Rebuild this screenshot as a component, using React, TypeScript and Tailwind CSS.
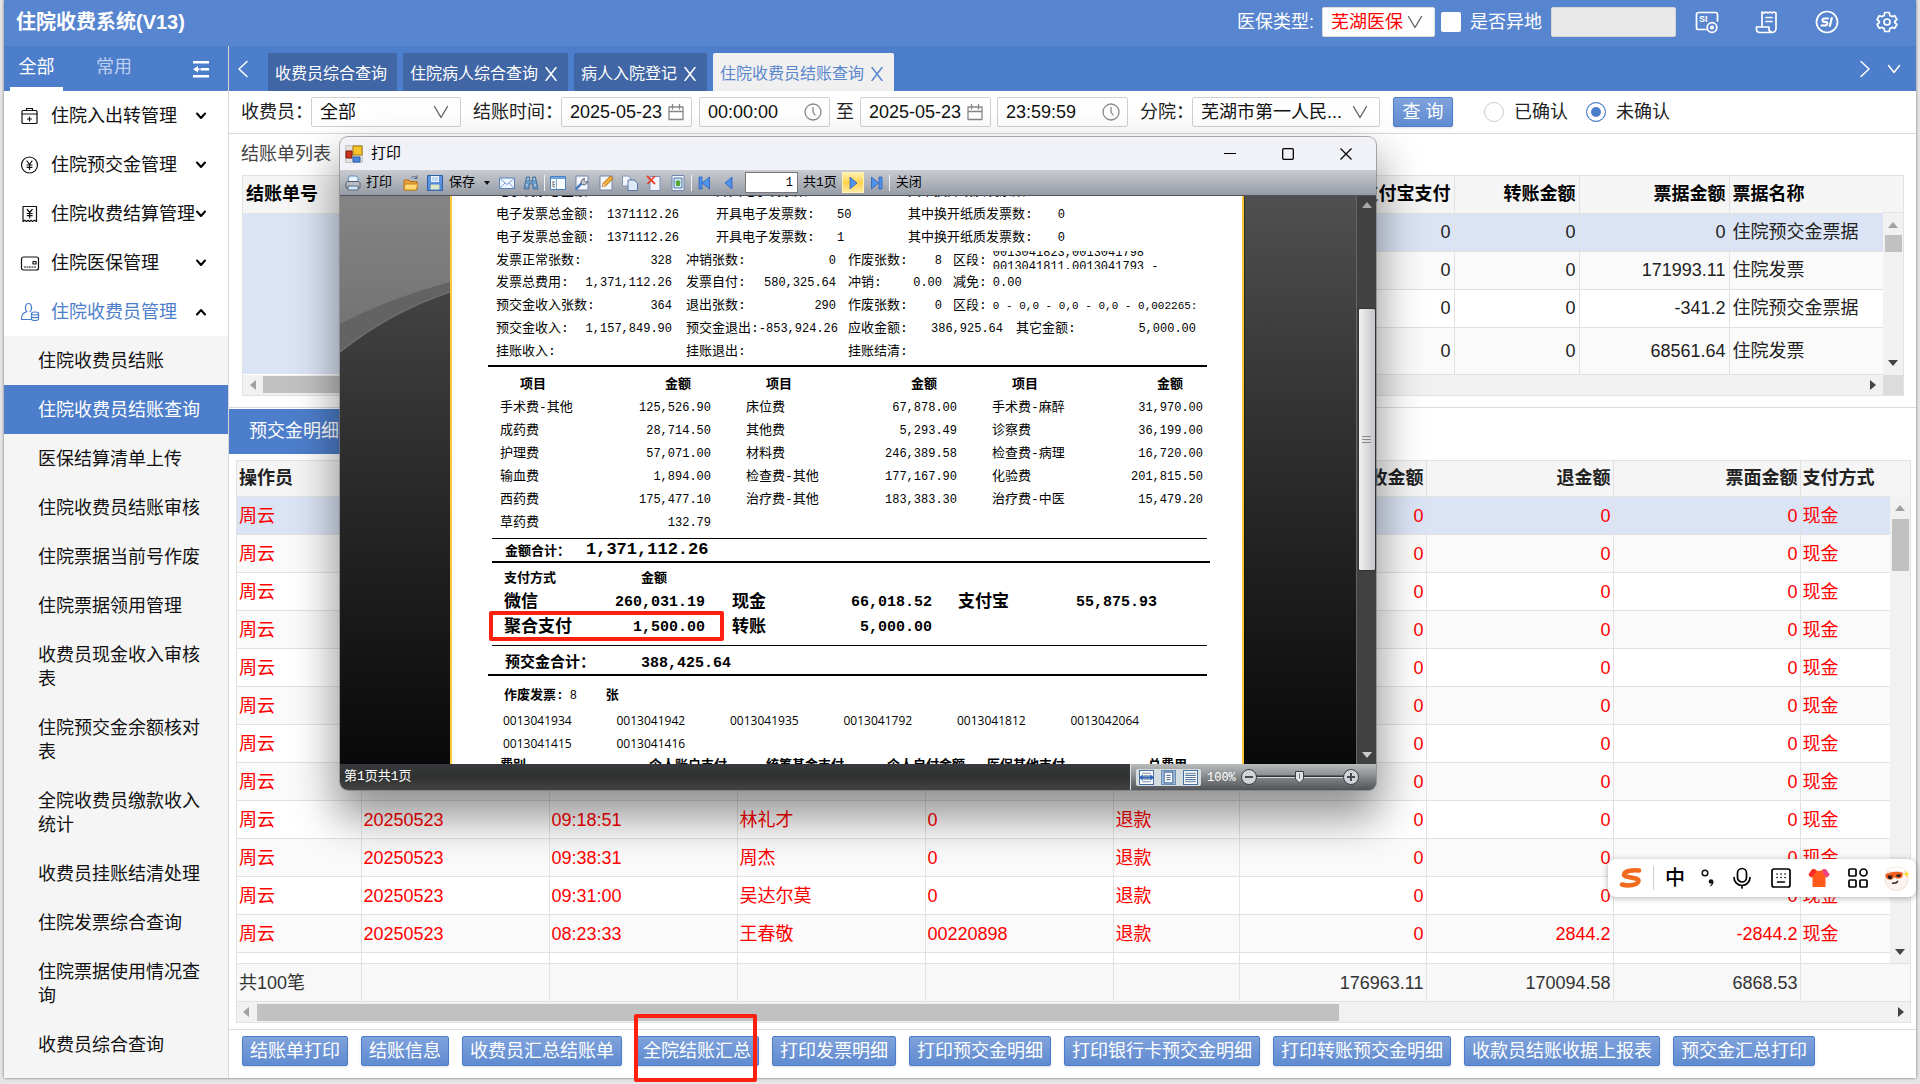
import type { ReactNode } from "react";
import { useState } from "react";

interface MenuItem {
  label: string;
  icon: ReactNode;
  open?: boolean;
}

interface DetailRow {
  date?: string;
  time?: string;
  name?: string;
  no?: string;
  kind?: string;
  received: string;
  refund: string;
  face: string;
}

const svgBase = {
  fill: "none",
  stroke: "currentColor",
  strokeLinecap: "round" as const,
  strokeLinejoin: "round" as const,
};

const menu: MenuItem[] = [
  {
    label: "住院入出转管理",
    icon: (
      <svg viewBox="0 0 20 20" className="size-5" strokeWidth="1.2" {...svgBase}>
        <rect x="2" y="4.500" width="15" height="13" rx="1" />
        <path d="M2 8h15M6.500 4.500V2.500h6v2M9.500 11v4M7.500 13h4" />
      </svg>
    ),
  },
  {
    label: "住院预交金管理",
    icon: (
      <svg viewBox="0 0 20 20" className="size-5" strokeWidth="1.2" {...svgBase}>
        <circle cx="9.500" cy="10" r="8" />
        <path d="M7 6l2.500 3.500L12 6M9.500 9.500v5M7 10h5M7 12.300h5" />
      </svg>
    ),
  },
  {
    label: "住院收费结算管理",
    icon: (
      <svg viewBox="0 0 20 20" className="size-5" strokeWidth="1.2" {...svgBase}>
        <path d="M3 2.500h13.500v15l-2-1.300-2 1.300-1.500-1.300L9.500 17.500 8 16.200 6.500 17.500l-1.700-1.300L3 17.500z" />
        <path d="M7.200 5.500l2.500 3 2.500-3M9.700 8.500V14M7.200 9.500h5M7.200 11.700h5" />
      </svg>
    ),
  },
  {
    label: "住院医保管理",
    icon: (
      <svg viewBox="0 0 20 20" className="size-5" strokeWidth="1.200" {...svgBase}>
        <rect x="1.500" y="4" width="17" height="13" rx="2" />
        <rect x="13" y="8.500" width="3" height="2.500" />
        <path d="M4.500 14h1M7 14h1M9.500 14h1M12 14h1M14.500 14h1" />
      </svg>
    ),
  },
  {
    label: "住院收费员管理",
    open: true,
    icon: (
      <svg viewBox="0 0 20 20" className="size-5" strokeWidth="1.2" {...svgBase}>
        <path d="M10 9.500C12 8.500 12.500 1.500 8.500 1.500S5 8.500 7 9.500C3 11 1.500 12.500 1.500 17.500h9" />
        <ellipse cx="15" cy="11.500" rx="3.500" ry="1.500" />
        <path d="M11.500 11.500v5.500c0 .8 1.600 1.500 3.500 1.500s3.500-.7 3.500-1.500v-5.500M11.500 14.200c0 .8 1.600 1.500 3.500 1.500s3.500-.7 3.500-1.500" />
      </svg>
    ),
  },
];

const subMenu = [
  "住院收费员结账",
  "住院收费员结账查询",
  "医保结算清单上传",
  "住院收费员结账审核",
  "住院票据当前号作废",
  "住院票据领用管理",
  "收费员现金收入审核表",
  "住院预交金余额核对表",
  "全院收费员缴款收入统计",
  "收费员挂账结清处理",
  "住院发票综合查询",
  "住院票据使用情况查询",
  "收费员综合查询",
];

const tabs = [
  { label: "收费员综合查询", closable: false },
  { label: "住院病人综合查询", closable: true },
  { label: "病人入院登记", closable: true },
  { label: "住院收费员结账查询", closable: true, active: true },
];

const bills = [
  { alipay: "0", transfer: "0", amount: "0", name: "住院预交金票据" },
  { alipay: "0", transfer: "0", amount: "171993.11", name: "住院发票" },
  { alipay: "0", transfer: "0", amount: "-341.2", name: "住院预交金票据" },
  { alipay: "0", transfer: "0", amount: "68561.64", name: "住院发票" },
];

const zero = { received: "0", refund: "0", face: "0" };

const details: DetailRow[] = [
  zero,
  zero,
  zero,
  zero,
  zero,
  zero,
  zero,
  zero,
  { date: "20250523", time: "09:18:51", name: "林礼才", no: "0", kind: "退款", ...zero },
  { date: "20250523", time: "09:38:31", name: "周杰", no: "0", kind: "退款", ...zero },
  { date: "20250523", time: "09:31:00", name: "吴达尔莫", no: "0", kind: "退款", ...zero },
  {
    date: "20250523",
    time: "08:23:33",
    name: "王春敬",
    no: "00220898",
    kind: "退款",
    received: "0",
    refund: "2844.2",
    face: "-2844.2",
  },
];

const actions = [
  "结账单打印",
  "结账信息",
  "收费员汇总结账单",
  "全院结账汇总",
  "打印发票明细",
  "打印预交金明细",
  "打印银行卡预交金明细",
  "打印转账预交金明细",
  "收款员结账收据上报表",
  "预交金汇总打印",
];

const fees = [
  [
    ["手术费-其他", "125,526.90"],
    ["成药费", "28,714.50"],
    ["护理费", "57,071.00"],
    ["输血费", "1,894.00"],
    ["西药费", "175,477.10"],
    ["草药费", "132.79"],
  ],
  [
    ["床位费", "67,878.00"],
    ["其他费", "5,293.49"],
    ["材料费", "246,389.58"],
    ["检查费-其他", "177,167.90"],
    ["治疗费-其他", "183,383.30"],
  ],
  [
    ["手术费-麻醉", "31,970.00"],
    ["诊察费", "36,199.00"],
    ["检查费-病理", "16,720.00"],
    ["化验费", "201,815.50"],
    ["治疗费-中医", "15,479.20"],
  ],
];

const voided = [
  "0013041934",
  "0013041942",
  "0013041935",
  "0013041792",
  "0013041812",
  "0013042064",
  "0013041415",
  "0013041416",
];

const fieldClass =
  "h-[30px] w-full rounded-xs border border-[#d0d0d0] bg-white pl-2 text-lg leading-none text-[#111] outline-none";

function Caret({ className }: { className?: string }) {
  return (
    <svg viewBox="0 0 16 14" className={className} strokeWidth="1.4" {...svgBase}>
      <path d="M1.500 1.500L8 12.500l6.500-11" />
    </svg>
  );
}

function SelectBox({ id, value, className }: { id: string; value: string; className: string }) {
  return (
    <div className={`relative ${className}`}>
      <select id={id} className={`${fieldClass} appearance-none`} defaultValue={value}>
        <option>{value}</option>
      </select>
      <Caret className="pointer-events-none absolute top-2 right-3 h-[14px] w-4 text-[#666]" />
    </div>
  );
}

function DateBox({ id, label, value, clock }: { id: string; label: string; value: string; clock?: boolean }) {
  return (
    <div className="relative w-[131px]">
      <input id={id} aria-label={label} type="text" defaultValue={value} className={fieldClass} />
      {clock ? (
        <svg viewBox="0 0 18 18" className="pointer-events-none absolute top-[6px] right-2 size-[18px] text-[#888]" strokeWidth="1.3" {...svgBase}>
          <circle cx="9" cy="9" r="8" />
          <path d="M9 4.500V9l2 3" />
        </svg>
      ) : (
        <svg viewBox="0 0 18 18" className="pointer-events-none absolute top-[6px] right-[7px] size-[18px] text-[#888]" strokeWidth="1.3" {...svgBase}>
          <path d="M2 4h14v12.500H2zM2 8.500h14M5.500 1.500V6M12.500 1.500V6" />
        </svg>
      )}
    </div>
  );
}

function Header() {
  const [remote, setRemote] = useState(false);

  return (
    <header className="flex h-[46px] shrink-0 items-center bg-[#5885cf] pb-[3px] pl-3 text-white">
      <h1 className="flex-1 text-xl font-bold">住院收费系统(V13)</h1>
      <label htmlFor="insurance" className="text-lg">
        医保类型:
      </label>
      <div className="relative ml-2 w-[113px]">
        <select
          id="insurance"
          defaultValue="芜湖医保"
          className="h-[30px] w-full appearance-none rounded-xs border border-[#ddd] bg-white pl-2 text-lg leading-none text-[#f00]"
        >
          <option>芜湖医保</option>
        </select>
        <Caret className="pointer-events-none absolute top-2 right-3 h-[14px] w-4 text-[#666]" />
      </div>
      <input
        id="remote"
        type="checkbox"
        checked={remote}
        onChange={(e) => setRemote(e.target.checked)}
        className="ml-[6px] size-5 appearance-none rounded-xs bg-white"
      />
      <label htmlFor="remote" className="ml-[9px] text-lg">
        是否异地
      </label>
      <input aria-label="是否异地" disabled className="ml-[9px] h-[30px] w-[125px] rounded-xs border border-[#d5d5d5] bg-[#e9e9e9]" />
      <div className="mr-[17px] ml-[19px] flex items-center gap-9">
        <button type="button" aria-label="SI">
          <svg viewBox="0 0 24 24" className="size-6" strokeWidth="1.700" {...svgBase}>
            <path d="M11 19.500H3.500a2 2 0 0 1-2-2v-13a2 2 0 0 1 2-2h17a2 2 0 0 1 2 2V11" />
            <circle cx="17" cy="17.500" r="4.800" />
            <circle cx="17" cy="17.500" r="1.200" />
            <text x="4" y="12" fontSize="9" fontWeight="bold" fill="currentColor" stroke="none">
              SI
            </text>
          </svg>
        </button>
        <button type="button" aria-label="票据">
          <svg viewBox="0 0 24 24" className="size-6" strokeWidth="1.700" {...svgBase}>
            <path d="M7 16V2l2 1 2-1 2 1 2-1 2 1 2-1 2 1v15.500a4 4 0 0 1-4 4H4.500a3 3 0 0 1-3-3V17H14v2.500a2 2 0 0 0 2 2M11 7.500h6M11 11.500h6" />
          </svg>
        </button>
        <button type="button" aria-label="医保">
          <svg viewBox="0 0 24 24" className="size-6" strokeWidth="1.700" {...svgBase}>
            <circle cx="12" cy="12" r="10.500" />
            <path strokeWidth="2.200" d="M13 8.500H9.500c-2.500 0-2.800 3.200-.3 3.300l1.800.2c2 .2 1.500 3.500-.8 3.500H6.500M16.800 8l-2 8" />
          </svg>
        </button>
        <button type="button" aria-label="设置">
          <svg viewBox="0 0 24 24" className="size-6" strokeWidth="1.700" {...svgBase}>
            <path d="M9.800 2.500h4.400l.7 3 1.900 1.100 2.900-.9 2.200 3.800-2.200 2v1l2.200 2-2.200 3.800-2.900-.9-1.900 1.100-.7 3H9.800l-.7-3-1.900-1.100-2.900.9-2.200-3.800 2.200-2v-1l-2.200-2 2.200-3.800 2.900.9 1.900-1.100z" />
            <circle cx="12" cy="12" r="3" />
          </svg>
        </button>
      </div>
    </header>
  );
}

function Sidebar() {
  const [current, setCurrent] = useState("住院收费员结账查询");

  return (
    <aside className="flex w-[225px] shrink-0 flex-col border-r border-[#d8d8d8] bg-[#f5f5f5]">
      <div className="flex h-[45px] shrink-0 items-start bg-[#4d7ecb] pl-[6px] text-lg text-white">
        <button type="button" className="h-full w-[53px] border-b-4 border-white">
          全部
        </button>
        <button type="button" className="ml-6 h-full w-[54px] border-b-4 border-transparent text-[#bcd0f0]">
          常用
        </button>
        <button type="button" aria-label="收起菜单" className="mt-[13px] mr-[17px] ml-auto">
          <svg viewBox="0 0 20 20" className="size-5" fill="currentColor">
            <path d="M2 2h16v2.500H2zM9.500 9h8.500v2.500H9.500zM2 16h16v2.500H2zM2 10.200l5-3.200v2.200h1.500v2H7v2.200z" />
          </svg>
        </button>
      </div>
      <nav className="bg-white">
        {menu.map((item) => (
          <button
            key={item.label}
            type="button"
            className={`flex h-[49px] w-full items-center pr-[21px] pl-4 text-lg whitespace-nowrap ${item.open ? "text-[#4d7ecb]" : "text-[#111]"}`}
          >
            {item.icon}
            <span className="ml-[11px] flex-1 text-left">{item.label}</span>
            <svg viewBox="0 0 12 10" className="-ml-2 h-[10px] w-3 text-black" {...svgBase} strokeWidth="2">
              <path d={item.open ? "M2 7.500L6 3l4 4.500" : "M2 2.500L6 7l4-4.500"} />
            </svg>
          </button>
        ))}
      </nav>
      <ul>
        {subMenu.map((label) => (
          <li key={label}>
            <a
              href="#"
              onClick={() => setCurrent(label)}
              className={`block pt-[13px] pr-5 pb-3 pl-[34px] text-lg leading-6 ${current === label ? "bg-[#4d7ecb] text-white" : "text-[#111]"}`}
            >
              {label}
            </a>
          </li>
        ))}
      </ul>
    </aside>
  );
}

function TabBar() {
  return (
    <div className="flex h-[45px] shrink-0 items-end bg-[#4d7ecb] text-white">
      <button type="button" aria-label="向左" className="flex h-full w-[39px] items-center pl-2">
        <svg viewBox="0 0 12 18" className="h-[18px] w-3" strokeWidth="1.500" {...svgBase}>
          <path d="M10 1.500L2 9l8 7.500" />
        </svg>
      </button>
      <div className="flex flex-1 gap-[6px]">
        {tabs.map((tab) => (
          <div
            key={tab.label}
            className={`flex h-[38px] items-center gap-[6px] rounded-t-xs pt-1 pr-[10px] pl-[7px] ${tab.active ? "bg-[#f0f0f0] text-[#5a86cc]" : "bg-[#4166a6]"}`}
          >
            <a href="#" className="whitespace-nowrap">
              {tab.label}
            </a>
            {tab.closable && (
              <button type="button" aria-label="关闭标签">
                <svg viewBox="0 0 14 14" className="size-[14px]" strokeWidth="1.500" {...svgBase}>
                  <path d="M2 .5l10 13M12 .5L2 13.500" />
                </svg>
              </button>
            )}
          </div>
        ))}
      </div>
      <div className="flex h-full items-center gap-4 pr-[15px]">
        <button type="button" aria-label="向右">
          <svg viewBox="0 0 12 18" className="h-[18px] w-3" strokeWidth="1.500" {...svgBase}>
            <path d="M2 1.500L10 9l-8 7.500" />
          </svg>
        </button>
        <button type="button" aria-label="更多">
          <svg viewBox="0 0 14 10" className="h-[10px] w-[14px]" strokeWidth="1.500" {...svgBase}>
            <path d="M1.500 1.500L7 8.500l5.500-7" />
          </svg>
        </button>
      </div>
    </div>
  );
}

function FilterBar() {
  const [state, setState] = useState("open");
  const radioClass =
    "size-5 appearance-none rounded-full border border-[#ccc] bg-white checked:border-[#4d7ecb] checked:bg-[#4d7ecb] checked:shadow-[inset_0_0_0_4px_white]";

  return (
    <form className="flex h-[43px] shrink-0 items-center border-b border-[#d8d8d8] pl-3 text-lg whitespace-nowrap text-[#222]">
      <label htmlFor="cashier" className="-mr-[2px]">
        收费员：
      </label>
      <SelectBox id="cashier" value="全部" className="w-[150px]" />
      <label htmlFor="from-date" className="-mr-[2px] ml-3">
        结账时间：
      </label>
      <DateBox id="from-date" label="结账时间" value="2025-05-23" />
      <div className="ml-[7px]">
        <DateBox id="from-time" label="结账时间" value="00:00:00" clock />
      </div>
      <span className="mx-[6px]">至</span>
      <DateBox id="to-date" label="至" value="2025-05-23" />
      <div className="ml-[6px]">
        <DateBox id="to-time" label="至" value="23:59:59" clock />
      </div>
      <label htmlFor="branch" className="-mr-[2px] ml-3">
        分院：
      </label>
      <SelectBox id="branch" value="芜湖市第一人民..." className="w-[188px]" />
      <button
        type="button"
        className="ml-[13px] h-[30px] w-[60px] rounded-xs border border-[#4d7ecb] bg-linear-to-b from-[#7fa2dc] to-[#5f8bd0] leading-none text-white shadow-sm"
      >
        查 询
      </button>
      <input id="confirmed" type="radio" name="state" className={`ml-[31px] ${radioClass}`} checked={state === "done"} onChange={() => setState("done")} />
      <label htmlFor="confirmed" className="mx-[10px]">
        已确认
      </label>
      <input id="unconfirmed" type="radio" name="state" className={`ml-2 ${radioClass}`} checked={state === "open"} onChange={() => setState("open")} />
      <label htmlFor="unconfirmed" className="ml-[10px]">
        未确认
      </label>
    </form>
  );
}

function Triangle({ dir, className }: { dir: "up" | "down" | "left" | "right"; className?: string }) {
  const d = {
    up: "M0 8l5-6 5 6z",
    down: "M0 2l5 6 5-6z",
    left: "M8 0L2 5l6 5z",
    right: "M2 0l6 5-6 5z",
  }[dir];
  return (
    <svg viewBox="0 0 10 10" className={`size-[10px] ${className ?? "text-[#444]"}`} fill="currentColor">
      <path d={d} />
    </svg>
  );
}

function rowColor(i: number) {
  if (i === 0) return "bg-[#dbe4f5]";
  return i % 2 ? "bg-[#fafafa]" : "bg-white";
}

function BillTable() {
  const cell = "border-r border-b border-[#e2e2e2] px-[3px]";
  return (
    <section className="flex shrink-0 flex-col border-b border-[#dcdcdc] pr-3 pb-[11px] pl-[13px] text-lg">
      <h2 className="-ml-px flex h-[41px] items-center pb-px text-[#444]">结账单列表</h2>
      <div className="border border-[#e2e2e2]">
        <div className="flex">
          <table className="flex-1 table-fixed border-collapse">
            <colgroup>
              <col />
              <col className="w-[150px]" />
              <col className="w-[125px]" />
              <col className="w-[150px]" />
              <col className="w-[154px]" />
            </colgroup>
            <thead>
              <tr className="h-[37px] bg-[#f5f5f5] text-black">
                <th className={`${cell} text-left`}>结账单号</th>
                <th className={`${cell} text-right`}>支付宝支付</th>
                <th className={`${cell} text-right`}>转账金额</th>
                <th className={`${cell} text-right`}>票据金额</th>
                <th className="border-b border-[#e2e2e2] px-[3px] text-left">票据名称</th>
              </tr>
            </thead>
            <tbody className="text-[#222]">
              {bills.map((bill, i) => (
                <tr key={i} className={`h-[38px] last:h-[47px] ${rowColor(i)}`}>
                  {i === 0 && <td rowSpan={4} className="bg-[#dbe4f5]" />}
                  <td className={`${cell} text-right`}>{bill.alipay}</td>
                  <td className={`${cell} text-right`}>{bill.transfer}</td>
                  <td className={`${cell} text-right`}>{bill.amount}</td>
                  <td className="border-b border-[#e2e2e2] px-[3px]">{bill.name}</td>
                </tr>
              ))}
            </tbody>
          </table>
          <div className="flex w-5 flex-col">
            <div className="h-[37px] border-b border-[#e2e2e2] bg-[#f5f5f5]" />
            <div className="flex flex-1 flex-col items-center bg-[#f1f1f1] py-[7px]">
              <Triangle dir="up" className="text-[#a0a0a0]" />
              <div className="mt-[5px] h-[17px] w-[17px] bg-[#c1c1c1]" />
              <Triangle dir="down" className="mt-auto text-[#444]" />
            </div>
          </div>
        </div>
        <div className="flex h-5 items-center bg-[#f1f1f1]">
          <Triangle dir="left" className="mx-[5px] text-[#a0a0a0]" />
          <div className="h-[17px] w-1/3 bg-[#c1c1c1]" />
          <Triangle dir="right" className="mr-[5px] ml-auto text-[#444]" />
          <div className="h-full w-5 bg-[#dcdcdc]" />
        </div>
      </div>
    </section>
  );
}

function DetailCols() {
  return (
    <colgroup>
      <col className="w-[124px]" />
      <col className="w-[188px]" />
      <col className="w-[188px]" />
      <col className="w-[188px]" />
      <col className="w-[188px]" />
      <col className="w-[126px]" />
      <col className="w-[187px]" />
      <col className="w-[187px]" />
      <col className="w-[187px]" />
      <col />
    </colgroup>
  );
}

function DetailTable() {
  const cell = "border-r border-b border-[#e2e2e2] px-[2px] text-left";
  const num = "border-r border-b border-[#e2e2e2] px-[2px] text-right";
  const last = "border-b border-[#e2e2e2] px-[2px] text-left";

  return (
    <section className="flex min-h-0 flex-1 flex-col border-b border-[#dcdcdc] pr-[5px] pb-[6px] pl-[7px] text-lg">
      <div className="flex min-h-0 flex-1 flex-col border border-[#e2e2e2]">
        <div className="flex min-h-0 flex-1">
          <div className="flex-1 overflow-hidden">
            <table className="w-full table-fixed border-collapse">
              <DetailCols />
              <thead>
                <tr className="h-[36px] bg-[#f5f5f5] text-[#222]">
                  <th className={cell}>操作员</th>
                  <th className={cell} />
                  <th className={cell} />
                  <th className={cell} />
                  <th className={cell} />
                  <th className={cell} />
                  <th className={num}>收金额</th>
                  <th className={num}>退金额</th>
                  <th className={num}>票面金额</th>
                  <th className={`${last} whitespace-nowrap`}>支付方式</th>
                </tr>
              </thead>
              <tbody className="text-[#f00]">
                {details.map((row, i) => (
                  <tr key={i} className={`h-[38px] ${rowColor(i)}`}>
                    <td className={cell}>周云</td>
                    <td className={cell}>{row.date}</td>
                    <td className={cell}>{row.time}</td>
                    <td className={cell}>{row.name}</td>
                    <td className={cell}>{row.no}</td>
                    <td className={cell}>{row.kind}</td>
                    <td className={num}>{row.received}</td>
                    <td className={num}>{row.refund}</td>
                    <td className={num}>{row.face}</td>
                    <td className={last}>现金</td>
                  </tr>
                ))}
                <tr className="h-[38px]">
                  {Array.from({ length: 9 }, (_, i) => (
                    <td key={i} className={cell} />
                  ))}
                  <td className={last} />
                </tr>
              </tbody>
            </table>
          </div>
          <div className="flex w-5 flex-col">
            <div className="h-[36px] shrink-0 bg-[#f5f5f5]" />
            <div className="flex flex-1 flex-col items-center bg-[#f1f1f1] py-[6px]">
              <Triangle dir="up" className="text-[#a0a0a0]" />
              <div className="mt-[6px] h-[52px] w-[17px] bg-[#c1c1c1]" />
              <Triangle dir="down" className="mt-auto text-[#444]" />
            </div>
          </div>
        </div>
        <div className="flex h-[39px] shrink-0 border-y border-[#e2e2e2] bg-[#f8f8f8] text-[#333]">
          <table className="h-full flex-1 table-fixed border-collapse">
            <DetailCols />
            <tbody>
              <tr>
                <td className="border-r border-[#e2e2e2] px-[2px]">共100笔</td>
                {["", "", "", "", "", "176963.11", "170094.58", "6868.53"].map((total, i) => (
                  <td key={i} className="border-r border-[#e2e2e2] px-[2px] text-right">
                    {total}
                  </td>
                ))}
                <td />
              </tr>
            </tbody>
          </table>
          <div className="w-5" />
        </div>
        <div className="flex h-5 shrink-0 items-center bg-[#f1f1f1] px-1">
          <Triangle dir="left" className="text-[#a0a0a0]" />
          <div className="ml-[6px] h-[17px] w-[65%] bg-[#c1c1c1]" />
          <Triangle dir="right" className="ml-auto text-[#444]" />
        </div>
      </div>
    </section>
  );
}

function ToolIcon({ label, children }: { label: string; children: ReactNode }) {
  return (
    <button type="button" aria-label={label} className="size-4">
      <svg viewBox="0 0 16 16" className="size-4">
        {children}
      </svg>
    </button>
  );
}

function Separator() {
  return <div className="h-4 w-px bg-[#eef0f3]" />;
}

function PrintToolbar() {
  const sheet = <path d="M2 1h12v14H2z" fill="#f4f7fc" stroke="#7288a8" />;

  return (
    <div className="flex h-[26px] shrink-0 items-center border-b border-[#4c5462] bg-linear-to-b from-[#c9ccd1] to-[#969ba5] pl-[5px] text-[13px] text-black">
      <ToolIcon label="打印">
        <path d="M4 1h7l2 2v5H3z" fill="#e8f3fd" stroke="#5a8fc4" />
        <path d="M1 8.500c0-1 1-2 2-2h10c1 0 2 1 2 2V13H1z" fill="#b8bdc6" stroke="#555c68" />
        <path d="M3 11h10v4H3z" fill="#cfe5fa" stroke="#5a6a80" />
      </ToolIcon>
      <span className="ml-[5px]">打印</span>
      <div className="ml-[11px] flex gap-2">
        <ToolIcon label="打开">
          <path d="M1 5h5l1 1.500h7V15H1z" fill="#e8a23a" stroke="#b5701a" />
          <path d="M2 9h13l-2 6H1z" fill="#ffd873" stroke="#c98522" />
          <path d="M8 3c2-2 4-2 6 0M14 .5V3.500h-3" fill="none" stroke="#536680" />
        </ToolIcon>
        <ToolIcon label="保存">
          <path d="M.5.500h15v15H.5z" fill="#5d93dc" stroke="#2c5fa8" />
          <path d="M4 1h8v6H4z" fill="#eaf3ff" />
          <path d="M3 9h10v6H3z" fill="#dbe8c8" stroke="#4c7fc4" />
          <path d="M5 3h6M5 5h6" stroke="#9bb8dc" />
        </ToolIcon>
      </div>
      <span className="ml-[6px]">保存</span>
      <svg viewBox="0 0 8 6" className="ml-2 h-[6px] w-2">
        <path d="M1 1h6L4 5z" fill="#111" />
      </svg>
      <div className="mr-[5px] ml-2 flex gap-2">
        <ToolIcon label="邮件">
          <path d="M.5 3h15v10.500H.5z" fill="#eef5ff" stroke="#5e83bb" />
          <path d="M1 3.500l7 6 7-6M1 13l5-5M15 13l-5-5" fill="none" stroke="#7ea0d2" />
        </ToolIcon>
        <ToolIcon label="查找">
          <path d="M3.500 2h3v4h3V2h3l2.500 12h-5V9h-4v5H1z" fill="#6c9ac7" stroke="#3a648f" strokeWidth=".8" />
          <path d="M3 10h2M11 10h2M4 4h2M10 4h2" stroke="#dcecfb" />
        </ToolIcon>
      </div>
      <Separator />
      <div className="mx-[5px] flex gap-2">
        <ToolIcon label="目录">
          <path d="M.5 1.500h15v13H.5z" fill="#f7fafe" stroke="#4d7fbd" />
          <path d="M1 2h14v2H1z" fill="#6ea3dd" />
          <path d="M6.500 4v10" stroke="#7da4d4" />
          <path d="M3 6v6M3 7h2M3 9.500h2M3 12h2" stroke="#666" strokeWidth=".8" />
        </ToolIcon>
        <ToolIcon label="参数">
          {sheet}
          <path d="M1.500 14.500L8 8" stroke="#4f7fc0" strokeWidth="2.500" />
          <path d="M7.500 8.500a3.500 3.500 0 0 1 3-5l-.5 2 1.500 1.500 2-.5a3.500 3.500 0 0 1-5 3z" fill="#c4c9d2" stroke="#616977" />
        </ToolIcon>
        <ToolIcon label="编辑">
          {sheet}
          <path d="M4 11.500l1-3L12.500 1l2.500 2.500L7.500 11z" fill="#f5ac35" stroke="#b06d15" />
          <path d="M4 11.500l1-3 2.500 2.500z" fill="#f7dcb0" />
        </ToolIcon>
        <ToolIcon label="复制">
          <path d="M.5 1h6l2 2v8h-8z" fill="#f2f6fc" stroke="#7e95b8" />
          <path d="M6 5h6l3.500 3v7.500H6z" fill="#dfe9f7" stroke="#5b78a5" />
        </ToolIcon>
        <ToolIcon label="删除">
          <path d="M4 1.500h10v14H4z" fill="#f1f5fb" stroke="#7e93b5" />
          <path d="M1 1l8 8M9 1L1.500 9" stroke="#e8402a" strokeWidth="1.800" />
        </ToolIcon>
        <ToolIcon label="页面设置">
          <path d="M2 .500h12v15H2z" fill="#f4f7fb" stroke="#6d86ab" />
          <path d="M4 3h8v10H4z" fill="#d5e6f4" stroke="#4272a5" />
          <path d="M6 11V9L5.500 6.500 8 5l2.500 1.500L10 9v2z" fill="#56a53b" />
        </ToolIcon>
      </div>
      <Separator />
      <div className="mr-2 ml-[5px] flex gap-2">
        <ToolIcon label="首页">
          <path d="M2 2h3v12H2zM12.500 2v12L5 8z" fill="#4f93ea" stroke="#1f57b8" strokeWidth=".7" />
        </ToolIcon>
        <ToolIcon label="上一页">
          <path d="M11 2v12L4 8z" fill="#4f93ea" stroke="#1f57b8" strokeWidth=".7" />
        </ToolIcon>
      </div>
      <input aria-label="页码" type="text" defaultValue="1" className="h-[21px] w-[53px] border border-[#777] bg-white pr-1 text-right font-[Liberation_Mono] text-xs" />
      <span className="mx-[5px]">共1页</span>
      <button type="button" aria-label="下一页" className="mr-1 grid h-[21px] w-[22px] place-items-center border border-[#fff3b8] bg-linear-to-b from-[#fff0a8] via-[#ffd24a] to-[#ffe99a]">
        <svg viewBox="0 0 16 16" className="size-4">
          <path d="M5 2l7 6-7 6z" fill="#4f93ea" stroke="#1f57b8" strokeWidth=".7" />
        </svg>
      </button>
      <ToolIcon label="末页">
        <path d="M3.500 2l7 6-7 6zM11 2h3v12h-3z" fill="#4f93ea" stroke="#1f57b8" strokeWidth=".7" />
      </ToolIcon>
      <div className="ml-[5px] flex items-center gap-[6px]">
        <Separator />
        <button type="button">关闭</button>
      </div>
    </div>
  );
}

function Pair({ label, value, className }: { label: string; value: string; className: string }) {
  return (
    <div className={`flex justify-between ${className}`}>
      <span>{label}</span>
      <span className="text-xs leading-5">{value}</span>
    </div>
  );
}

function Report() {
  return (
    <article className="flex flex-1 flex-col pl-9 text-[13px] leading-5 whitespace-nowrap text-black">
      <div className="-mt-[15px] grid h-[182px] shrink-0 auto-rows-fr items-center pl-2">
        {["50", "50", "1"].map((count, i) => (
          <div key={i} className="flex">
            <Pair label="电子发票总金额:" value="1371112.26" className="mr-[37px] w-[183px]" />
            <span className="w-[121px]">开具电子发票数:</span>
            <span className="w-[71px] text-xs leading-5">{count}</span>
            <Pair label="其中换开纸质发票数:" value="0" className="w-[157px]" />
          </div>
        ))}
        <div className="flex">
          <Pair label="发票正常张数:" value="328" className="mr-[14px] w-[176px]" />
          <Pair label="冲销张数:" value="0" className="mr-3 w-[150px]" />
          <Pair label="作废张数:" value="8" className="mr-[11px] w-[94px]" />
          <span className="mr-[6px]">区段:</span>
          {/* two wrapped lines, cut off by the field's height */}
          <span className="flex h-[18px] flex-col justify-center overflow-hidden text-xs leading-[14px]">
            <span>0013041823,0013041798</span>
            <span>0013041811,0013041793 -</span>
          </span>
        </div>
        <div className="flex">
          <Pair label="发票总费用:" value="1,371,112.26" className="mr-[14px] w-[176px]" />
          <Pair label="发票自付:" value="580,325.64" className="mr-3 w-[150px]" />
          <Pair label="冲销:" value="0.00" className="mr-[11px] w-[94px]" />
          <span className="mr-[6px]">减免:</span>
          <span className="text-xs leading-5">0.00</span>
        </div>
        <div className="flex">
          <Pair label="预交金收入张数:" value="364" className="mr-[14px] w-[176px]" />
          <Pair label="退出张数:" value="290" className="mr-3 w-[150px]" />
          <Pair label="作废张数:" value="0" className="mr-[11px] w-[94px]" />
          <span className="mr-[6px]">区段:</span>
          <span className="text-[11px] leading-5">0 - 0,0 - 0,0 - 0,0 - 0,002265:</span>
        </div>
        <div className="flex">
          <Pair label="预交金收入:" value="1,157,849.90" className="mr-[14px] w-[176px]" />
          <Pair label="预交金退出:" value="-853,924.26" className="mr-3 w-[150px]" />
          <Pair label="应收金额:" value="386,925.64" className="mr-[13px] w-[155px]" />
          <Pair label="其它金额:" value="5,000.00" className="w-[180px]" />
        </div>
        <div className="flex">
          <span className="w-[190px]">挂账收入:</span>
          <span className="w-[162px]">挂账退出:</span>
          <span>挂账结清:</span>
        </div>
      </div>

      <div className="mt-[2px] w-[719px] border-t-2 border-black" />

      <div className="flex gap-[35px] pt-[7px] pl-3">
        {fees.map((group, i) => (
          <table key={i} className="w-[211px] self-start">
            <thead>
              <tr className="h-[22px]">
                <th className="pl-5 text-left">项目</th>
                <th className="pr-5 text-right">金额</th>
              </tr>
            </thead>
            <tbody>
              {group.map(([name, amount]) => (
                <tr key={name} className="h-[23px]">
                  <td>{name}</td>
                  <td className="text-right text-xs">{amount}</td>
                </tr>
              ))}
            </tbody>
          </table>
        ))}
      </div>

      <div className="mt-1 ml-1 w-[715px] border-t border-black" />
      <div className="flex h-[22px] items-center gap-4 pl-[17px] font-bold">
        <span className="pt-1">金额合计：</span>
        <span className="text-[17px]">1,371,112.26</span>
      </div>
      <div className="ml-1 w-[718px] border-t-2 border-black" />

      <table className="mt-1 ml-4 w-[653px] table-fixed text-[17px] font-bold">
        <colgroup>
          <col className="w-[82px]" />
          <col className="w-[119px]" />
          <col className="w-[27px]" />
          <col className="w-[67px]" />
          <col className="w-[133px]" />
          <col className="w-[26px]" />
          <col className="w-[67px]" />
          <col />
        </colgroup>
        <thead>
          <tr className="h-[23px] text-[13px]">
            <th className="text-left">支付方式</th>
            <th className="pr-[38px] text-right">金额</th>
            <th colSpan={6} />
          </tr>
        </thead>
        <tbody>
          <tr className="h-[25px]">
            <td>微信</td>
            <td className="text-right text-[15px]">260,031.19</td>
            <td />
            <td>现金</td>
            <td className="text-right text-[15px]">66,018.52</td>
            <td />
            <td>支付宝</td>
            <td className="text-right text-[15px]">55,875.93</td>
          </tr>
          <tr className="h-[26px]">
            <td>聚合支付</td>
            <td className="text-right text-[15px]">1,500.00</td>
            <td />
            <td>转账</td>
            <td className="text-right text-[15px]">5,000.00</td>
            <td colSpan={3} />
          </tr>
        </tbody>
      </table>

      <div className="mt-1 ml-1 w-[715px] border-t border-black" />
      <div className="flex h-[29px] items-center pt-2 pl-[17px] text-[15px] font-bold">
        <span className="w-[136px]">预交金合计：</span>
        <span>388,425.64</span>
      </div>
      <div className="w-[719px] border-t-2 border-black" />

      <div className="mt-[10px] flex h-[22px] items-center pl-4 font-bold">
        <span>作废发票:</span>
        <span className="ml-[6px] w-9 text-xs font-normal">8</span>
        <span>张</span>
      </div>
      <div className="mt-[3px] grid w-[696px] grid-cols-6 pl-[15px] font-[Open_Sans] text-xs leading-[23px]">
        {voided.map((no) => (
          <span key={no}>{no}</span>
        ))}
      </div>
      <div className="mt-px flex pl-3 font-bold">
        <span className="w-[149px]">费别</span>
        <span className="w-[117px]">个人账户支付</span>
        <span className="w-[121px]">统筹基金支付</span>
        <span className="w-[100px]">个人自付金额</span>
        <span className="w-[161px]">医保其他支付</span>
        <span>总费用</span>
      </div>
    </article>
  );
}

function StatusBar() {
  return (
    <div className="flex h-[26px] shrink-0 bg-linear-to-b from-[#38393e] via-[#2f3130] to-[#434343] text-[13px] text-white">
      <span className="flex flex-1 items-center pl-1">第1页共1页</span>
      <div className="flex w-[246px] items-center border-l border-[#ddd] bg-linear-to-b from-[#b9bcbd] via-[#85898b] to-[#505458] pl-[5px]">
        <div className="flex h-[17px] gap-[7px] rounded-xs bg-[#d6dde0] px-[3px]">
          <svg viewBox="0 0 14 14" className="mt-px size-[15px]">
            <path d="M.5.500h13v13H.5z" fill="#fff" stroke="#47719f" />
            <path d="M3 3h8M3 11h8M4 5.500h6M4 8.500h6" stroke="#7b8ba0" />
            <path d="M0 7l3.500-3v2h7V4L14 7l-3.500 3V8h-7v2z" fill="#2b62b8" />
          </svg>
          <svg viewBox="0 0 14 14" className="mt-px size-[15px]">
            <path d="M.5.500h13v13H.5z" fill="#a7c0dd" stroke="#6d8cb2" />
            <path d="M3 2h8v10H3z" fill="#fff" stroke="#47719f" />
            <path d="M5 5h4M5 7h4M5 9h4" stroke="#5b7ba0" />
          </svg>
          <svg viewBox="0 0 14 14" className="mt-px size-[15px]">
            <path d="M.5.500h13v13H.5z" fill="#fff" stroke="#47719f" />
            <path d="M2 3h10M2 5h10M2 7h10M2 9h10M2 11h10" stroke="#5b7ba0" />
          </svg>
        </div>
        <span className="ml-[6px] pt-[2px] text-xs">100%</span>
        <svg viewBox="0 0 120 18" className="ml-1 h-[18px] w-[120px]">
          <path d="M16 8.500h88" stroke="#333" strokeWidth="2" />
          <path d="M16 9.500h88" stroke="#d8d8d8" />
          <circle cx="9" cy="9" r="7.500" fill="#d0d4d6" stroke="#3b4046" />
          <path d="M5 9h8" stroke="#444b52" strokeWidth="2" />
          <path d="M55.500 3.500h8v7.500l-4 4-4-4z" fill="#e0e3e5" stroke="#3b4046" />
          <path d="M59.500 5.500v5" stroke="#777" />
          <circle cx="111" cy="9" r="7.500" fill="#d0d4d6" stroke="#3b4046" />
          <path d="M107 9h8M111 5v8" stroke="#444b52" strokeWidth="2" />
        </svg>
      </div>
    </div>
  );
}

function PrintWindow() {
  return (
    <div
      role="dialog"
      aria-label="打印"
      className="absolute top-[137px] left-[340px] flex h-[653px] w-[1036px] flex-col overflow-hidden rounded-lg bg-[#f1f2f8] font-['Liberation_Mono','Noto_Sans_CJK_SC',monospace] shadow-[0_0_0_1px_rgba(120,120,120,0.6),0_24px_44px_4px_rgba(0,0,0,0.42)]"
    >
      <div className="flex h-[33px] shrink-0 items-center pl-[5px] text-[15px] text-black">
        <svg viewBox="0 0 18 18" className="size-[18px]">
          <path d="M.5.500h17v17H.5z" fill="#e0e0e0" stroke="#c4c4c4" />
          <path d="M8 1h9v9H8z" fill="#f6c52c" stroke="#a9780c" />
          <path d="M1 6h6v7H1z" fill="#c8321f" stroke="#80180c" />
          <path d="M8 12h7v5H8z" fill="#4e86dc" stroke="#295aa5" />
        </svg>
        <span className="ml-2 flex-1 pt-1">打印</span>
        <div className="flex gap-[46px] pr-[24px]">
          <button type="button" aria-label="最小化">
            <svg viewBox="0 0 12 12" className="size-3" stroke="#000">
              <path d="M0 5.500h12" />
            </svg>
          </button>
          <button type="button" aria-label="最大化">
            <svg viewBox="0 0 12 12" className="size-3" fill="none" stroke="#000" strokeWidth="1.300">
              <rect x=".7" y=".7" width="10.600" height="10.600" rx="1" />
            </svg>
          </button>
          <button type="button" aria-label="关闭">
            <svg viewBox="0 0 12 12" className="size-3" stroke="#000" strokeWidth="1.200">
              <path d="M.5.500l11 11M11.500.500l-11 11" />
            </svg>
          </button>
        </div>
      </div>
      <PrintToolbar />
      <div className="flex min-h-0 flex-1 overflow-hidden bg-linear-to-b from-[#505050] to-[#090909]">
        <svg viewBox="0 0 110 160" className="h-40 w-[110px]">
          <defs>
            <linearGradient id="glare" x1="0" y1="0" x2="0" y2="1">
              <stop offset="0" stopColor="#848484" />
              <stop offset="1" stopColor="#747474" />
            </linearGradient>
          </defs>
          <path d="M0 0h110v96Q50 116 0 156z" fill="#636363" />
          <path d="M0 0h110v86Q50 102 0 128z" fill="url(#glare)" />
          <path d="M110 96Q50 116 0 156" fill="none" stroke="#6e6e6e" strokeWidth="1.500" />
        </svg>
        <div className="flex flex-1 self-stretch overflow-hidden border-x-2 border-[#ffc53a] bg-white">
          <Report />
        </div>
        <div className="w-[112px] border-l border-black/40" />
        <div className="flex w-5 flex-col items-center border-l border-[#666] bg-[#414141] py-1">
          <Triangle dir="up" className="text-[#aaa]" />
          <div className="mt-[98px] flex h-[263px] w-[18px] flex-col items-center justify-center gap-[2px] rounded-xs border border-[#333] bg-linear-to-r from-[#f2f2f2] to-[#c4c5c9]">
            <div className="h-px w-[9px] bg-[#888]" />
            <div className="h-px w-[9px] bg-[#888]" />
            <div className="h-px w-[9px] bg-[#888]" />
          </div>
          <Triangle dir="down" className="mt-auto text-[#ccc]" />
        </div>
      </div>
      <StatusBar />
    </div>
  );
}

function ImeBar() {
  return (
    <div className="absolute right-1 bottom-[187px] flex h-[38px] w-[308px] items-center rounded-lg bg-white pl-[11px] text-black shadow-[0_1px_6px_rgba(0,0,0,0.3)]">
      <svg viewBox="0 0 24 20" className="h-5 w-6" fill="none" stroke="#f26a1b" strokeWidth="4.500" strokeLinecap="round">
        <path d="M20 2.500C13 2 5.500 3 5 6.500S20 9 19.500 13 9 18.500 3 16.500" />
      </svg>
      <div className="ml-[10px] h-6 w-px bg-[#ccc]" />
      <span className="ml-[11px] text-xl font-medium">中</span>
      <svg viewBox="0 0 16 20" className="ml-[15px] h-5 w-4">
        <circle cx="5" cy="5" r="2.800" fill="none" stroke="#111" strokeWidth="1.500" />
        <circle cx="11" cy="13.500" r="2.300" fill="#111" />
        <path d="M13 13.500c0 2.500-1 3.500-2.500 4.500" fill="none" stroke="#111" strokeWidth="1.300" />
      </svg>
      <svg viewBox="0 0 20 22" className="ml-4 h-[22px] w-5" strokeWidth="1.700" {...svgBase}>
        <rect x="5.500" y="1.500" width="9" height="13.500" rx="4.500" />
        <path d="M2 10.500a8 8 0 0 0 16 0M10 18.500V21" />
      </svg>
      <svg viewBox="0 0 20 20" className="ml-[19px] size-5" strokeWidth="1.700" {...svgBase}>
        <rect x="1" y="1" width="18" height="18" rx="2" />
        <path strokeWidth="1.600" d="M6 6h.1M10 6h.1M14 6h.1M6 9.500h.1M10 9.500h.1M14 9.500h.1M6.500 14h7" />
      </svg>
      <svg viewBox="0 0 22 20" className="ml-[17px] h-5 w-[22px]">
        <path d="M7 1c1 2.500 7 2.500 8 0l3 .5 3.500 5-2.500 3-1.500-.5V19h-13V9L3 9.500.5 6.500 4 1.500z" fill="#ff5a1c" />
        <path d="M15 1l3 .5 3.500 5-2.500 3-4-4z" fill="#f0418c" />
        <path d="M7 1L4 1.500.5 6.500l2.500 3 5-5z" fill="#fb2b2b" />
      </svg>
      <svg viewBox="0 0 20 20" className="ml-[18px] size-5" strokeWidth="1.700" {...svgBase}>
        <rect x="1" y="1" width="7" height="7" rx="1" />
        <rect x="12" y="1" width="7" height="7" rx="3.500" />
        <rect x="1" y="12" width="7" height="7" rx="1" />
        <rect x="12" y="12" width="7" height="7" rx="1" />
      </svg>
      <svg viewBox="0 0 26 26" className="ml-4 size-[26px]">
        <circle cx="12.500" cy="14" r="11.500" fill="#fdf3f0" stroke="#f0dcd8" />
        <path d="M3 6q3-5 6-3 4-3 8 0 4-1 4 4z" fill="#fff" stroke="#f3ebe8" />
        <path d="M1.500 9q9-3.500 17-1.500 1.500 5-3 6-4 .5-5-1.500-1.500 3-5.500 2.500T1.500 9z" fill="#f0601f" />
        <path d="M3.500 10.500l5 0-1 4-3-.5zM12 10l5-1-1 3h-3z" fill="#2b1c1c" />
        <path d="M8 18q4 1 6-2" stroke="#3b2626" fill="none" strokeWidth="1.500" />
        <path d="M22.500 5l1 3 2.500 1-2.500 1-1 3-1-3-2.500-1 2.500-1z" fill="#ffd83a" />
      </svg>
    </div>
  );
}

export default function App() {
  return (
    <div className="relative flex h-screen flex-col overflow-hidden bg-[#e6e6e8] px-1 pb-[6px] font-['Liberation_Sans','Noto_Sans_CJK_SC',sans-serif]">
      <div className="flex min-h-0 flex-1 flex-col bg-white shadow-[0_0_3px_rgba(0,0,0,0.5)]">
        <Header />
        <div className="flex min-h-0 flex-1">
          <Sidebar />
          <main className="flex min-w-0 flex-1 flex-col bg-white">
            <TabBar />
            <FilterBar />
            <BillTable />
            <div className="flex shrink-0 pt-px pb-[6px]">
              <button type="button" className="h-[45px] bg-[#4d7ecb] px-5 text-lg text-white">
                预交金明细
              </button>
            </div>
            <DetailTable />
            <footer className="flex h-12 shrink-0 items-start gap-[13px] pt-[6px] pl-[13px]">
              {actions.map((label) => (
                <button
                  key={label}
                  type="button"
                  className="h-[30px] rounded-xs border border-[#4d7ecb] bg-linear-to-b from-[#7fa2dc] to-[#5f8bd0] px-[7px] text-lg leading-none whitespace-nowrap text-white shadow-sm"
                >
                  {label}
                </button>
              ))}
            </footer>
          </main>
        </div>
      </div>
      <PrintWindow />
      <ImeBar />
      {/* highlight frames over the key figures */}
      <div className="pointer-events-none absolute top-[611px] left-[489px] h-[30px] w-[235px] rounded-xs border-4 border-[#ff2010]" />
      <div className="pointer-events-none absolute top-[1014px] left-[634px] h-[68px] w-[123px] rounded-xs border-4 border-[#ff2010]" />
    </div>
  );
}
